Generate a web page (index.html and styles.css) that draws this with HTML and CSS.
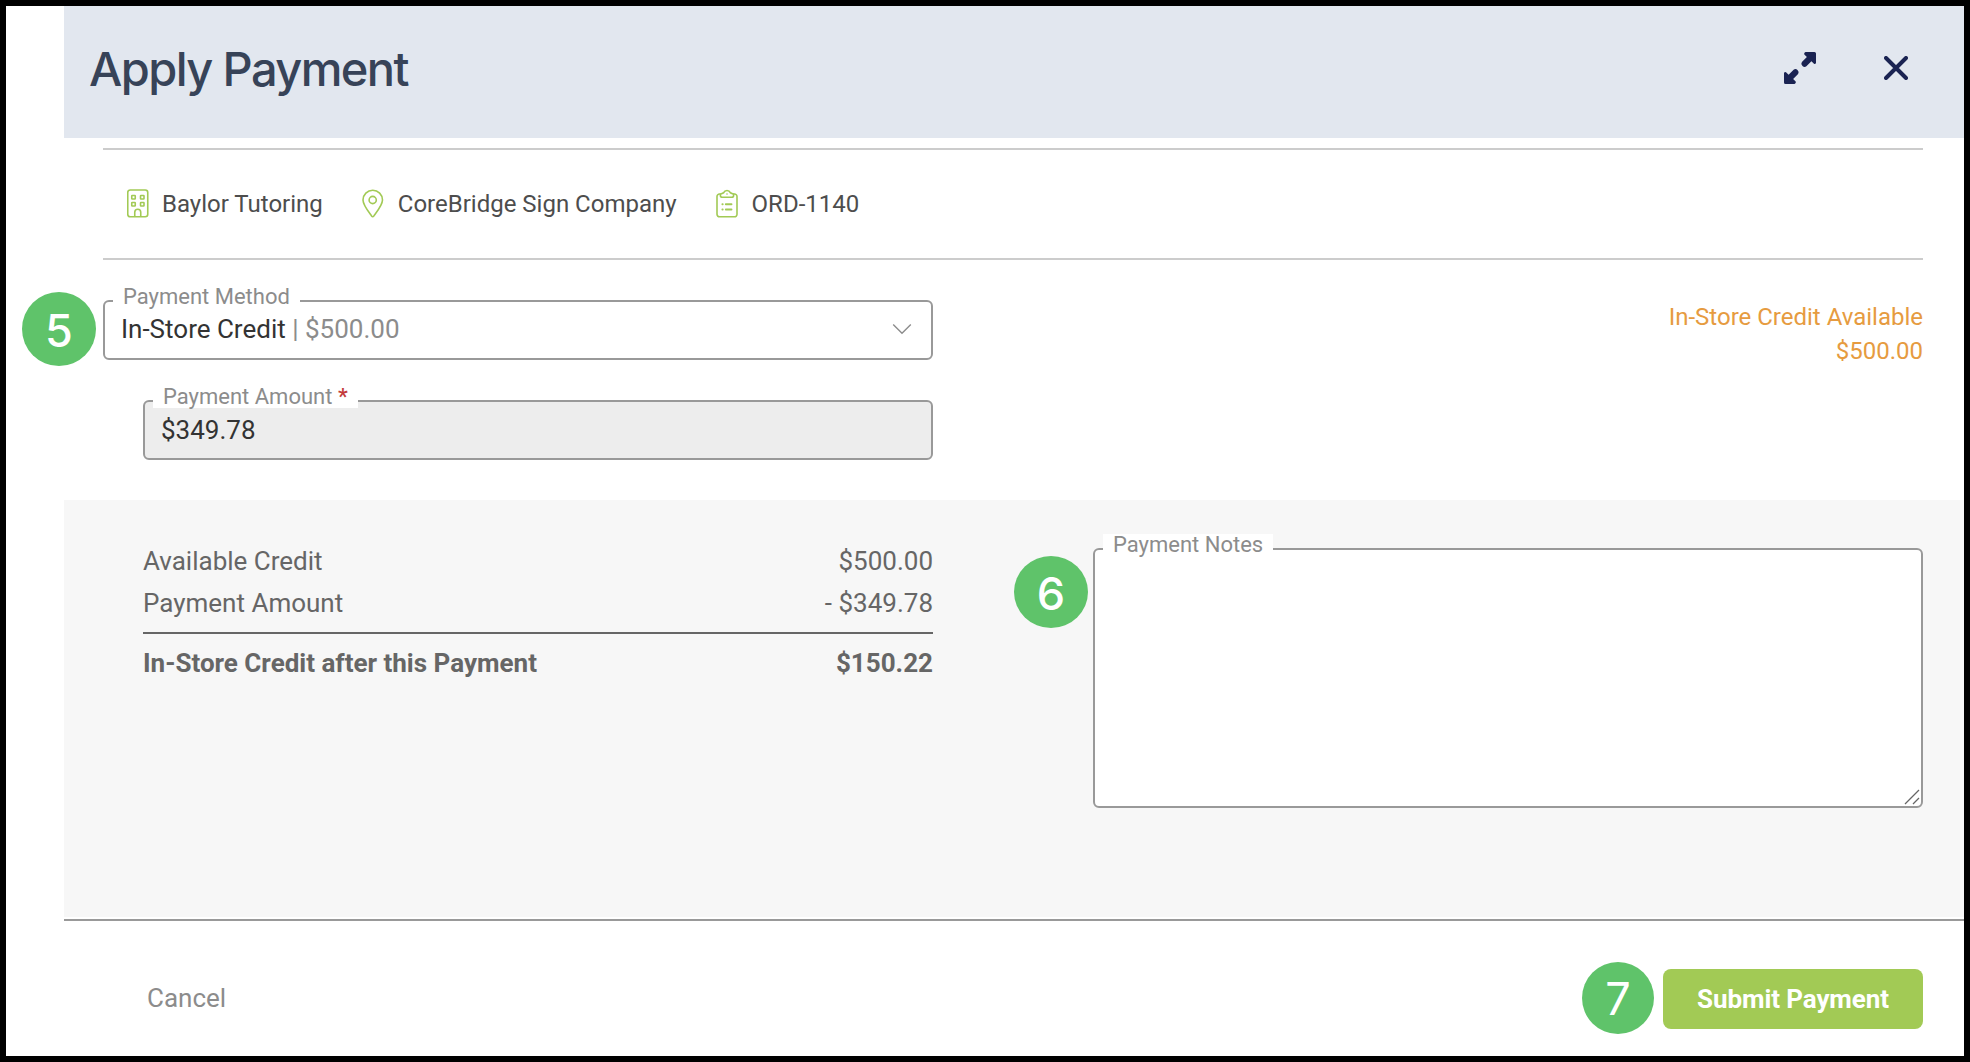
FILE: index.html
```html
<!DOCTYPE html>
<html lang="en">
<head>
<meta charset="utf-8">
<title>Apply Payment</title>
<link rel="stylesheet" href="styles.css">
</head>
<body>
<main class="frame">
  <section class="dialog">
    <header class="dialog-header">
      <h1 class="title">Apply Payment</h1>
      <div class="header-actions">
        <button class="icon-button" type="button" aria-label="Expand">
          <svg width="32" height="32" viewBox="0 0 32 32">
            <g fill="#1a2352">
              <path id="arrow" d="M21.500 0H30.500Q32 0 32 1.500V11Q31.400 12.400 30 11.800L27.400 9.200L22.400 14.200Q20.400 15.800 18.500 13.900Q16.400 11.800 17.900 9.900L22.900 4.900L20.300 2.500Q19.600 .6 21.500 0Z"/>
              <use href="#arrow" transform="rotate(180 16 16)"/>
            </g>
          </svg>
        </button>
        <button class="icon-button" type="button" aria-label="Close">
          <svg width="24" height="24" viewBox="0 0 24 24" fill="none" stroke="#1a2352" stroke-width="4" stroke-linecap="round">
            <path d="M2 2L22 22M22 2L2 22"/>
          </svg>
        </button>
      </div>
    </header>

    <div class="meta">
      <div class="meta-item">
        <svg width="22" height="30" viewBox="0 0 22 30" fill="none" stroke="#a2ca55" stroke-width="1.600">
          <rect x=".75" y="1" width="20" height="26.700" rx="2.500"/>
          <rect x="4.750" y="6.500" width="3.500" height="3.500" rx=".5"/>
          <rect x="13.500" y="6.500" width="3.500" height="3.500" rx=".5"/>
          <rect x="4.750" y="13.500" width="3.500" height="3.500" rx=".5"/>
          <rect x="13.500" y="13.500" width="3.500" height="3.500" rx=".5"/>
          <path d="M7.750 27.500V23.300A3 3 0 0 1 13.750 23.300V27.500"/>
        </svg>
        <span class="meta-text">Baylor Tutoring</span>
      </div>
      <div class="meta-item">
        <svg width="22" height="30" viewBox="0 0 22 30" fill="none" stroke="#a2ca55" stroke-width="1.600">
          <path d="M9.600 27Q10.700 28.400 11.800 27C16 21.300 20.500 15.800 20.500 11A9.750 9.750 0 0 0 1 11C1 15.800 5.400 21.300 9.600 27Z"/>
          <circle cx="10.700" cy="11" r="3.600"/>
        </svg>
        <span class="meta-text">CoreBridge Sign Company</span>
      </div>
      <div class="meta-item">
        <svg width="22" height="30" viewBox="0 0 22 30" fill="none" stroke="#a2ca55" stroke-width="1.600">
          <path d="M5 5H3.500A2.500 2.500 0 0 0 1 7.500V25.300A2.500 2.500 0 0 0 3.500 27.800H18.500A2.500 2.500 0 0 0 21 25.300V7.500A2.500 2.500 0 0 0 18.500 5H17"/>
          <path d="M7.500 3.800C9 .7 13 .7 14.500 3.800L17.600 5.200V6.500Q17.600 8.300 15.600 8.300H6.400Q4.400 8.300 4.400 6.500V5.200Z"/>
          <circle cx="11" cy="5" r=".8" fill="#a2ca55" stroke="none"/>
          <path d="M9.800 15.300H15.500M9.800 20.500H15.500M6.400 15.300H6.700M6.400 20.500H6.700" stroke-width="1.900" stroke-linecap="round"/>
        </svg>
        <span class="meta-text">ORD-1140</span>
      </div>
    </div>

    <div class="columns form-row">
      <div class="fields">
        <div class="field">
          <span class="field-label">Payment Method</span>
          <span>In-Store Credit<span class="muted"> | $500.00</span></span>
          <svg class="chevron" width="20" height="12" viewBox="0 0 20 12" fill="none" stroke="#8c8c8c" stroke-width="1.400">
            <path d="M1.200 1.500L10 10.200L18.800 1.500"/>
          </svg>
          <span class="badge badge-5">5</span>
        </div>
        <div class="field field-disabled">
          <span class="field-label">Payment Amount <b class="required">*</b></span>
          <span>$349.78</span>
        </div>
      </div>
      <div class="credit">
        <div>In-Store Credit Available</div>
        <div>$500.00</div>
      </div>
    </div>

    <div class="columns summary">
      <div class="totals">
        <div class="total-line"><span>Available Credit</span><span>$500.00</span></div>
        <div class="total-line"><span>Payment Amount</span><span>- $349.78</span></div>
        <div class="total-line total-final"><span>In-Store Credit after this Payment</span><span>$150.22</span></div>
      </div>
      <div class="field notes">
        <span class="field-label">Payment Notes</span>
        <svg class="resizer" width="16" height="16" viewBox="0 0 16 16" fill="none" stroke="#666" stroke-width="1.300">
          <path d="M1 15L15 1M9 15L15 9"/>
        </svg>
        <span class="badge badge-6">6</span>
      </div>
    </div>

    <footer class="dialog-footer">
      <button class="cancel" type="button">Cancel</button>
      <div class="submit-wrap">
        <button class="submit" type="button">Submit Payment</button>
        <span class="badge badge-7">7</span>
      </div>
    </footer>
  </section>
</main>
</body>
</html>
```

FILE: styles.css
```css
* { box-sizing: border-box; }

body {
  margin: 0;
  height: 1062px;
  overflow: hidden;
  font-family: Roboto, "Liberation Sans", sans-serif;
  font-size: 26px;
  color: #333;
}

button {
  border: 0;
  padding: 0;
  background: none;
  font: inherit;
}

.frame {
  width: 1970px;
  height: 1062px;
  padding-left: 58px;
  border: 6px solid #000;
  background: #fff;
}

.dialog {
  display: flex;
  flex-direction: column;
  height: 1050px;
}

.dialog-header {
  display: flex;
  justify-content: space-between;
  align-items: center;
  height: 132px;
  padding: 0 56px 0 25px;
  background: #e2e7ef;
}

.title {
  margin: 0;
  padding-bottom: 7px;
  font: 550 47px/60px Inter, sans-serif;
  letter-spacing: -1.6px;
  color: #374358;
}

.header-actions {
  display: flex;
  align-items: center;
  gap: 68px;
  padding-bottom: 8px;
}

.icon-button { display: flex; }

.meta {
  display: flex;
  align-items: center;
  gap: 39px;
  height: 112px;
  margin: 10px 41px 0 39px;
  padding-left: 24px;
  border-top: 2px solid #ccc;
  border-bottom: 2px solid #ccc;
  font-size: 24px;
  color: #4d4d4d;
}

.meta-item {
  display: flex;
  align-items: center;
  gap: 13px;
}

.meta-item + .meta-item { gap: 14px; }

.meta-text { line-height: 24px; }

.columns {
  display: grid;
  grid-template-columns: 830px 830px;
  column-gap: 160px;
  padding-left: 39px;
}

.form-row {
  height: 240px;
  padding-top: 40px;
}

.fields {
  display: flex;
  flex-direction: column;
  gap: 40px;
}

.field {
  position: relative;
  display: flex;
  justify-content: space-between;
  align-items: center;
  height: 60px;
  padding: 0 19px 3px 16px;
  border: 2px solid #999;
  border-radius: 6px;
  background: #fff;
}

.field-disabled {
  margin-left: 40px;
  padding-bottom: 1px;
  background: #ededed;
}

.field-label {
  position: absolute;
  left: 8px;
  top: -16px;
  padding: 0 10px;
  background: #fff;
  font-size: 22px;
  line-height: 22px;
  white-space: nowrap;
  color: #8c8c8c;
}

.required {
  font-weight: 500;
  color: #c33a3a;
}

.muted { color: #8c8c8c; }

.credit {
  font-size: 24px;
  line-height: 34px;
  text-align: right;
  color: #e69b40;
}

.summary {
  height: 417px;
  padding-top: 40px;
  background: #f7f7f7;
}

.totals {
  margin-left: 40px;
  color: #666;
}

.total-line {
  display: flex;
  justify-content: space-between;
  line-height: 42px;
}

.total-final {
  margin-top: 8px;
  padding-top: 8px;
  border-top: 2px solid #666;
  font-weight: 700;
}

.notes {
  height: 260px;
  margin-top: 8px;
}

.resizer {
  position: absolute;
  right: 1px;
  bottom: 1px;
}

.dialog-footer {
  display: flex;
  justify-content: space-between;
  align-items: flex-start;
  height: 137px;
  margin-top: 2px;
  padding: 48px 41px 0 83px;
  border-top: 2px solid #999;
}

.cancel {
  height: 58px;
  color: #8c8c8c;
}

.submit-wrap { position: relative; }

.submit {
  width: 260px;
  height: 60px;
  border-radius: 8px;
  background: #a2ca55;
  font-weight: 700;
  letter-spacing: -0.1px;
  color: #fff;
}

.badge {
  position: absolute;
  width: 72px;
  height: 72px;
  border-radius: 50%;
  background: #5fc36a;
  font: 500 45px/74px Inter, sans-serif;
  text-align: center;
  color: #fff;
}

.badge-5 {
  left: -83px;
  top: -10px;
  width: 74px;
  height: 74px;
  line-height: 78px;
}

.badge-6 {
  left: -81px;
  top: 6px;
  width: 74px;
  line-height: 76px;
}

.badge-7 {
  left: -81px;
  top: -7px;
  font-weight: 400;
}
```
